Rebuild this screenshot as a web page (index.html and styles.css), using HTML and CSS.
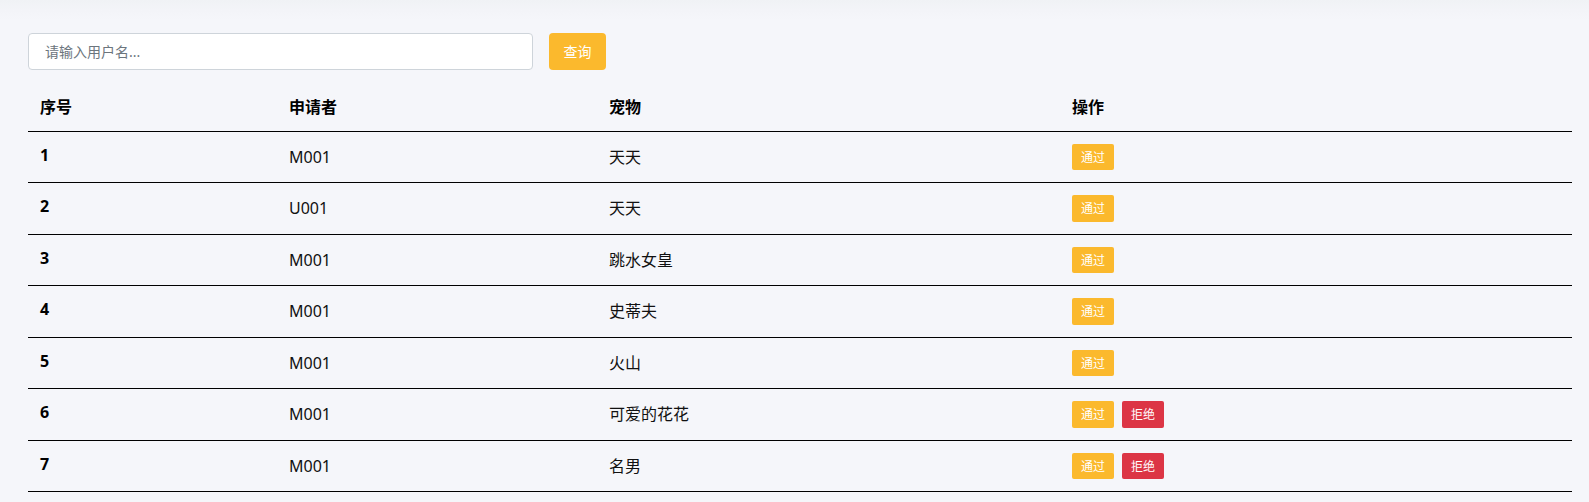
FILE: index.html
```html
<!DOCTYPE html>
<html lang="zh-CN">
<head>
<meta charset="utf-8">
<title>申请列表</title>
<link rel="stylesheet" href="styles.css">
</head>
<body>
<div class="page">
  <div class="search-bar">
    <input class="search-input" type="text" placeholder="请输入用户名...">
    <button class="btn btn-search" type="button">查询</button>
  </div>
  <table class="data-table">
    <colgroup>
      <col class="col-no">
      <col class="col-user">
      <col class="col-pet">
      <col class="col-op">
    </colgroup>
    <thead>
      <tr><th>序号</th><th>申请者</th><th>宠物</th><th>操作</th></tr>
    </thead>
    <tbody>
      <tr><th class="row-no">1</th><td>M001</td><td>天天</td><td><div class="actions"><button class="btn-sm btn-pass">通过</button></div></td></tr>
      <tr><th class="row-no">2</th><td>U001</td><td>天天</td><td><div class="actions"><button class="btn-sm btn-pass">通过</button></div></td></tr>
      <tr><th class="row-no">3</th><td>M001</td><td>跳水女皇</td><td><div class="actions"><button class="btn-sm btn-pass">通过</button></div></td></tr>
      <tr><th class="row-no">4</th><td>M001</td><td>史蒂夫</td><td><div class="actions"><button class="btn-sm btn-pass">通过</button></div></td></tr>
      <tr><th class="row-no">5</th><td>M001</td><td>火山</td><td><div class="actions"><button class="btn-sm btn-pass">通过</button></div></td></tr>
      <tr><th class="row-no">6</th><td>M001</td><td>可爱的花花</td><td><div class="actions"><button class="btn-sm btn-pass">通过</button><button class="btn-sm btn-reject">拒绝</button></div></td></tr>
      <tr><th class="row-no">7</th><td>M001</td><td>名男</td><td><div class="actions"><button class="btn-sm btn-pass">通过</button><button class="btn-sm btn-reject">拒绝</button></div></td></tr>
    </tbody>
  </table>
</div>
</body>
</html>
```
FILE: styles.css
```css
html, body {
  margin: 0;
  padding: 0;
}
body {
  background-color: #f5f6fa;
  background-image: linear-gradient(#f0f2f5 0, #f3f4f8 10px, #f5f6fa 20px);
  background-repeat: no-repeat;
  background-size: 100% 20px;
  font-family: "Segoe UI", "Noto Sans", "Noto Sans CJK SC", sans-serif;
  color: #212529;
  font-size: 16px;
  line-height: 1.5;
}
.page {
  padding: 33px 17px 0 28px;
}
.search-bar {
  display: flex;
  gap: 16px;
  margin-bottom: 13px;
}
.search-input {
  box-sizing: border-box;
  width: 505px;
  height: 36.5px;
  border: 1px solid #ced4da;
  border-radius: 4px;
  background: #fff;
  padding: 0 16px;
  font-family: inherit;
  font-size: 14px;
  color: #495057;
  outline: none;
}
.search-input::placeholder {
  color: #6c757d;
}
.btn {
  box-sizing: border-box;
  border: none;
  cursor: pointer;
  font-family: inherit;
}
.btn-search {
  width: 57px;
  height: 36.5px;
  border-radius: 4px;
  background: #fbb92d;
  color: #fff;
  font-size: 14px;
  padding: 0;
}
.data-table {
  width: 100%;
  border-collapse: collapse;
  table-layout: fixed;
}
.col-no { width: 249px; }
.col-user { width: 320px; }
.col-pet { width: 463px; }
.data-table thead th {
  text-align: left;
  font-weight: 700;
  color: #000;
  padding: 12px;
  border-bottom: 1px solid #000;
  vertical-align: bottom;
}
.data-table tbody th,
.data-table tbody td {
  padding: 12px;
  border-bottom: 1px solid #000;
  text-align: left;
}
.data-table tbody td {
  vertical-align: middle;
  font-weight: 400;
  color: #111;
}
.data-table tbody th.row-no {
  vertical-align: top;
  font-weight: 700;
  color: #000;
  padding-top: 11px;
}
.actions {
  display: flex;
  gap: 8px;
  align-items: center;
}
.btn-sm {
  box-sizing: border-box;
  border: none;
  height: 26.5px;
  width: 42px;
  padding: 0;
  border-radius: 2px;
  font-family: inherit;
  font-size: 12px;
  color: #fff;
  cursor: pointer;
}
.btn-pass {
  background: #fbb92d;
}
.btn-reject {
  background: #dc3545;
}
```
